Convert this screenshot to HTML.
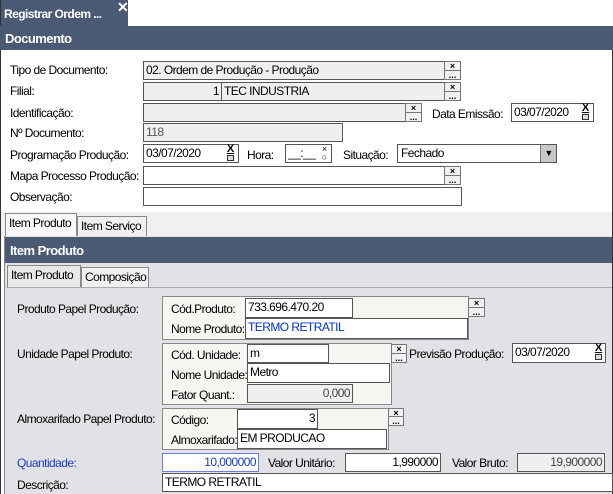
<!DOCTYPE html>
<html><head><meta charset="utf-8"><style>
*{box-sizing:border-box;margin:0;padding:0}
body{width:613px;height:494px;overflow:hidden;background:#fff;font-family:"Liberation Sans",sans-serif;font-size:12px;letter-spacing:-0.55px;color:#000;position:relative}
.a{position:absolute;white-space:nowrap}
.l{line-height:14px}
.in{position:absolute;border:1px solid #555;background:#fff;line-height:16px;padding:0 2px;overflow:hidden;white-space:nowrap}
.g{background:#efefef}
.r{text-align:right}
.b{position:absolute;width:17px;border:1px solid #777;background:#f0f0f0}
.b div{height:50%;border-bottom:1px solid #777;font-size:9px;line-height:8px;text-align:center;font-weight:bold;letter-spacing:0}
.b div:last-child{border-bottom:none}
.d{position:absolute;background:#fff;border:1px solid #555;border-left:none}
.d .x{font-size:11px;font-weight:bold;line-height:9px;text-align:center;letter-spacing:0;text-decoration:underline}
.d .s{width:7px;height:6px;border:1px solid #333;margin:1px auto 0;background:#ddd}
.hd{position:absolute;background:#4a5a74;color:#fff;font-weight:bold;font-size:13px;padding-left:5px}
.grp{position:absolute;border:1px solid #888;background:#f6f5f1}
.tab{position:absolute;border:1px solid #888;border-bottom:none;background:#f0f0f0;padding:0 3px;line-height:18px}
</style></head><body>
<div class="a" style="left:0;top:0;width:128px;height:26px;background:#4a5a74;color:#fff;font-weight:bold;font-size:12px;padding:7px 0 0 4px">Registrar Ordem ...</div>
<div class="a" style="left:117px;top:-1px;color:#fff;font-weight:bold;font-size:14px">✕</div>
<div class="a" style="left:0;top:0;width:1px;height:494px;background:#333"></div>
<div class="a" style="left:612px;top:26px;width:1px;height:468px;background:#333"></div>
<div class="hd" style="left:0;top:26px;width:613px;height:24px;line-height:26px">Documento</div>

<div class="a l" style="left:10px;top:63px">Tipo de Documento:</div>
<div class="in g" style="left:143px;top:61px;width:302px;height:19px">02. Ordem de Produção - Produção</div>
<div class="b" style="left:444px;top:61px;height:19px"><div>×</div><div>...</div></div>

<div class="a l" style="left:10px;top:84px">Filial:</div>
<div class="in g r" style="left:143px;top:82px;width:79px;height:19px">1</div>
<div class="in g" style="left:221px;top:82px;width:224px;height:19px">TEC INDUSTRIA</div>
<div class="b" style="left:444px;top:82px;height:19px"><div>×</div><div>...</div></div>

<div class="a l" style="left:10px;top:106px">Identificação:</div>
<div class="in g" style="left:143px;top:103px;width:263px;height:19px"></div>
<div class="b" style="left:405px;top:103px;height:19px"><div>×</div><div>...</div></div>
<div class="a l" style="left:432px;top:107px">Data Emissão:</div>
<div class="in" style="left:511px;top:103px;width:68px;height:19px;border-right:none">03/07/2020</div>
<div class="d" style="left:578px;top:103px;height:19px;width:16px"><div class="x">X</div><div class="s"></div></div>

<div class="a l" style="left:10px;top:126px">Nº Documento:</div>
<div class="in g" style="left:143px;top:123px;width:200px;height:19px;color:#555">118</div>

<div class="a l" style="left:10px;top:148px">Programação Produção:</div>
<div class="in" style="left:143px;top:144px;width:81px;height:19px;border-right:none">03/07/2020</div>
<div class="d" style="left:223px;top:144px;height:19px;width:16px"><div class="x">X</div><div class="s"></div></div>
<div class="a l" style="left:247px;top:148px">Hora:</div>
<div class="in" style="left:285px;top:144px;width:34px;height:19px;border-right:none">__:__</div>
<div class="d" style="left:318px;top:144px;height:19px;width:14px;font-size:9px;text-align:center;line-height:8px;letter-spacing:0"><div>×</div><div>○</div></div>
<div class="a l" style="left:343px;top:148px">Situação:</div>
<div class="in" style="left:397px;top:144px;width:160px;height:19px;padding-left:3px">Fechado</div>
<div class="a" style="left:540px;top:145px;width:16px;height:17px;background:#c8c8c8;border-left:1px solid #777;font-size:9px;text-align:center;line-height:17px">▼</div>

<div class="a l" style="left:10px;top:169px">Mapa Processo Produção:</div>
<div class="in" style="left:143px;top:166px;width:302px;height:19px"></div>
<div class="b" style="left:444px;top:166px;height:19px"><div>×</div><div>...</div></div>

<div class="a l" style="left:10px;top:190px">Observação:</div>
<div class="in" style="left:143px;top:187px;width:319px;height:19px"></div>

<div class="a" style="left:1px;top:212px;width:611px;height:24px;background:#f0f0f0"></div>
<div class="tab" style="left:5px;top:213px;height:23px;width:72px;background:#f8f8f8">Item Produto</div>
<div class="tab" style="left:77px;top:216px;height:20px;width:70px">Item Serviço</div>

<div class="a" style="left:4px;top:236px;width:608px;height:258px;background:#e2e1e6;border-left:1px solid #888"></div>
<div class="hd" style="left:5px;top:237px;width:607px;height:26px;line-height:28px">Item Produto</div>
<div class="tab" style="left:7px;top:265px;height:22px;width:74px;background:#e8e8ea">Item Produto</div>
<div class="tab" style="left:81px;top:267px;height:20px;width:68px;background:#f0f0f0">Composição</div>
<div class="a" style="left:6px;top:287px;width:606px;height:1px;background:#aaa"></div>

<div class="a l" style="left:17px;top:302px">Produto Papel Produção:</div>
<div class="grp" style="left:162px;top:296px;width:307px;height:44px"></div>
<div class="a l" style="left:171px;top:302px">Cód.Produto:</div>
<div class="in" style="left:245px;top:298px;width:108px;height:20px">733.696.470.20</div>
<div class="a l" style="left:171px;top:322px">Nome Produto:</div>
<div class="in" style="left:245px;top:318px;width:223px;height:21px;color:#0033cc">TERMO RETRATIL</div>
<div class="b" style="left:468px;top:298px;height:19px"><div>×</div><div>...</div></div>

<div class="a l" style="left:17px;top:347px">Unidade Papel Produto:</div>
<div class="grp" style="left:162px;top:343px;width:230px;height:62px"></div>
<div class="a l" style="left:171px;top:348px">Cód. Unidade:</div>
<div class="in" style="left:247px;top:344px;width:82px;height:19px">m</div>
<div class="a l" style="left:171px;top:368px">Nome Unidade:</div>
<div class="in" style="left:247px;top:363px;width:143px;height:20px">Metro</div>
<div class="a l" style="left:171px;top:388px">Fator Quant.:</div>
<div class="in g r" style="left:247px;top:384px;width:106px;height:19px;color:#444">0,000</div>
<div class="b" style="left:391px;top:344px;height:19px;width:16px"><div>×</div><div>...</div></div>
<div class="a l" style="left:409px;top:347px">Previsão Produção:</div>
<div class="in" style="left:512px;top:343px;width:81px;height:20px;border-right:none">03/07/2020</div>
<div class="d" style="left:592px;top:343px;height:20px;width:14px"><div class="x">X</div><div class="s"></div></div>

<div class="a l" style="left:17px;top:412px">Almoxarifado Papel Produto:</div>
<div class="grp" style="left:162px;top:408px;width:227px;height:42px"></div>
<div class="a l" style="left:171px;top:413px">Código:</div>
<div class="in r" style="left:237px;top:409px;width:81px;height:20px">3</div>
<div class="a l" style="left:171px;top:433px">Almoxarifado:</div>
<div class="in" style="left:237px;top:429px;width:150px;height:20px">EM PRODUCAO</div>
<div class="b" style="left:388px;top:408px;height:18px;width:16px"><div>×</div><div>...</div></div>

<div class="a l" style="left:17px;top:456px;color:#1a3ccc">Quantidade:</div>
<div class="in r" style="left:162px;top:453px;width:97px;height:19px;border-color:#6b7cf0;color:#1a3ccc">10,000000</div>
<div class="a l" style="left:268px;top:456px">Valor Unitário:</div>
<div class="in r" style="left:345px;top:453px;width:96px;height:19px">1,990000</div>
<div class="a l" style="left:452px;top:456px">Valor Bruto:</div>
<div class="in g r" style="left:517px;top:453px;width:88px;height:19px;color:#444">19,900000</div>

<div class="a l" style="left:17px;top:478px">Descrição:</div>
<div class="in" style="left:162px;top:473px;width:451px;height:19px">TERMO RETRATIL</div>
</body></html>
